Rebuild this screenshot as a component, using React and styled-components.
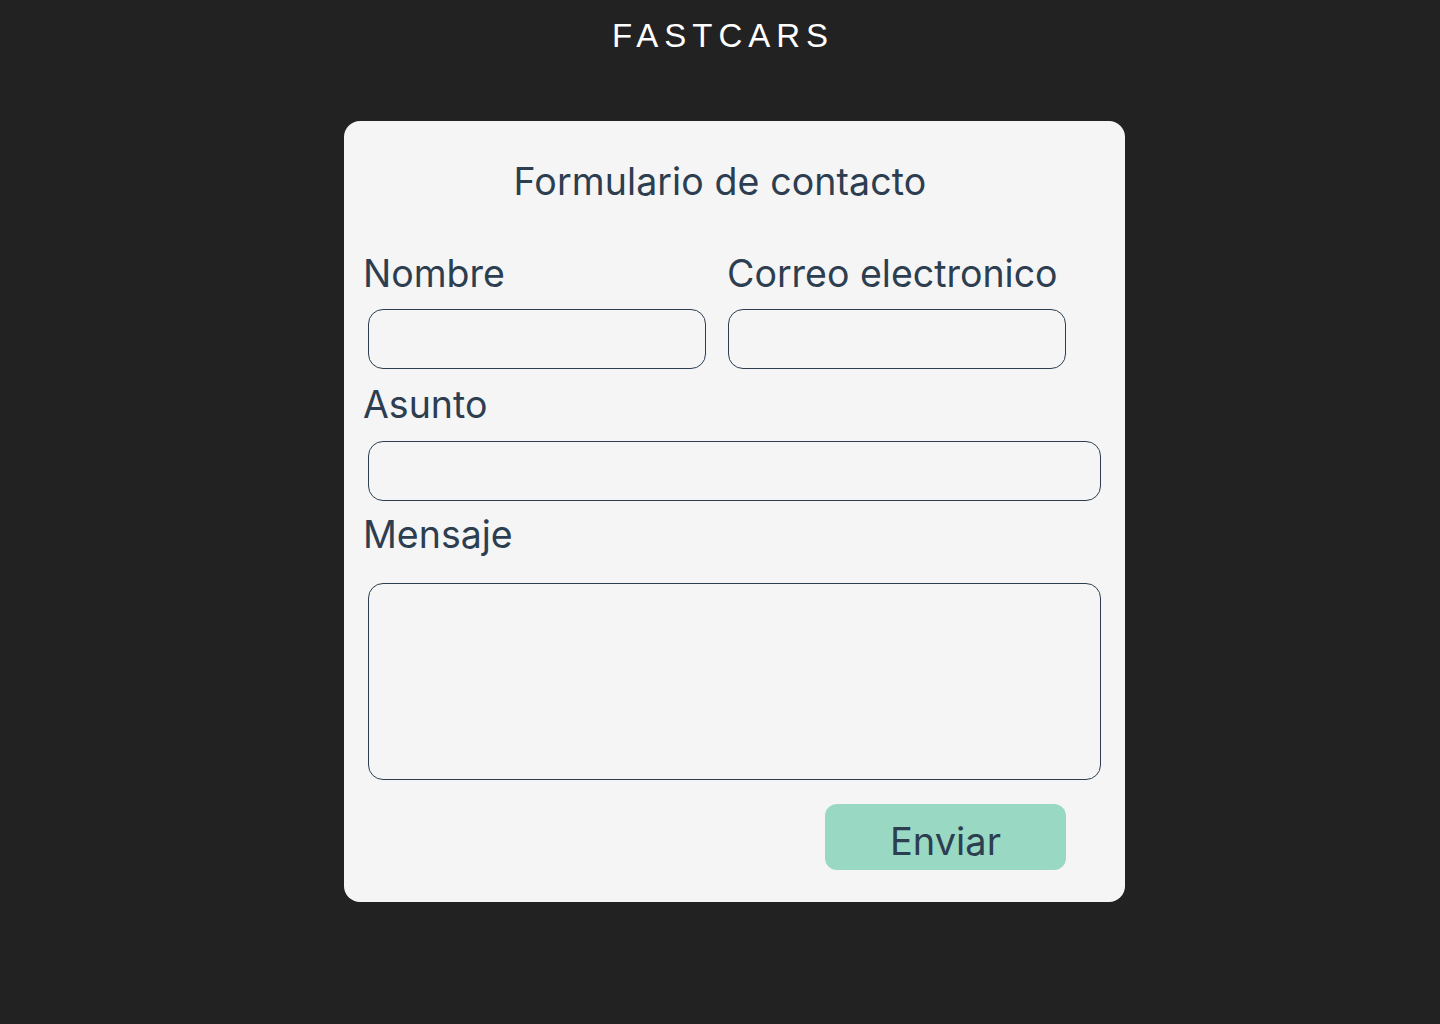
import React from "react";
import styled, { createGlobalStyle } from "styled-components";

const Global = createGlobalStyle`
  html, body { margin: 0; padding: 0; background: #222222; }
  body { min-height: 1024px; font-family: Inter, "Noto Sans", sans-serif; }
  * { box-sizing: border-box; }
`;

const Header = styled.header`
  padding-top: 16px;
  text-align: center;
  font-family: "Liberation Sans", Arial, sans-serif;
  font-size: 33px;
  line-height: 40px;
  letter-spacing: 6px;
  color: #ffffff;
  padding-left: 6px;
`;

const Stage = styled.main`
  display: flex;
  justify-content: center;
  padding: 65px 0 0 29px;
`;

const Card = styled.form`
  width: 781px;
  background: #f5f5f5;
  border-radius: 16px;
  padding: 39px 20px 32px 20px;
  color: #2c3e50;
  display: flex;
  flex-direction: column;
`;

const Title = styled.h1`
  margin: 0 0 48px 0;
  padding-right: 29px;
  text-align: center;
  font-weight: 400;
  font-size: 37.5px;
  letter-spacing: 0.1px;
  line-height: 44px;
`;

const Row = styled.div`
  display: grid;
  grid-template-columns: 364px 1fr;
`;

const Field = styled.div`
  display: flex;
  flex-direction: column;
`;

const Label = styled.label`
  font-size: 37.5px;
  line-height: 44px;
  font-weight: 400;
  letter-spacing: 0;
  margin-left: -1px;
  margin-top: ${(p) => p.$top || 0}px;
  margin-bottom: ${(p) => p.$bottom || 13}px;
`;

const Input = styled.input`
  display: block;
  height: 60px;
  width: ${(p) => p.$w};
  margin-left: ${(p) => p.$ml || 0}px;
  border: 1px solid #2c3e50;
  border-radius: 15px;
  background: transparent;
  font: inherit;
  font-size: 20px;
  padding: 0 14px;
  outline: none;
`;

const Area = styled.textarea`
  display: block;
  height: 197px;
  width: 733px;
  margin-left: 4px;
  border: 1px solid #2c3e50;
  border-radius: 15px;
  background: transparent;
  resize: none;
  font: inherit;
  font-size: 20px;
  padding: 12px 14px;
  outline: none;
`;

const Actions = styled.div`
  display: flex;
  justify-content: flex-end;
  padding-right: 39px;
  margin-top: 24px;
`;

const Button = styled.button`
  width: 241px;
  height: 66px;
  border: none;
  border-radius: 12px;
  background: #99d8c3;
  color: #2c3e50;
  font-family: Inter, "Noto Sans", sans-serif;
  font-size: 38px;
  line-height: 44px;
  padding: 15px 0 7px;
  cursor: pointer;
`;

export default function App() {
  return (
    <>
      <Global />
      <Header>FASTCARS</Header>
      <Stage>
        <Card onSubmit={(e) => e.preventDefault()}>
          <Title>Formulario de contacto</Title>
          <Row>
            <Field>
              <Label>Nombre</Label>
              <Input $w="338px" $ml={4} />
            </Field>
            <Field>
              <Label>Correo electronico</Label>
              <Input $w="338px" />
            </Field>
          </Row>
          <Field>
            <Label $top={14} $bottom={14}>Asunto</Label>
            <Input $w="733px" $ml={4} />
          </Field>
          <Field>
            <Label $top={12} $bottom={26}>Mensaje</Label>
            <Area />
          </Field>
          <Actions>
            <Button type="submit">Enviar</Button>
          </Actions>
        </Card>
      </Stage>
    </>
  );
}
